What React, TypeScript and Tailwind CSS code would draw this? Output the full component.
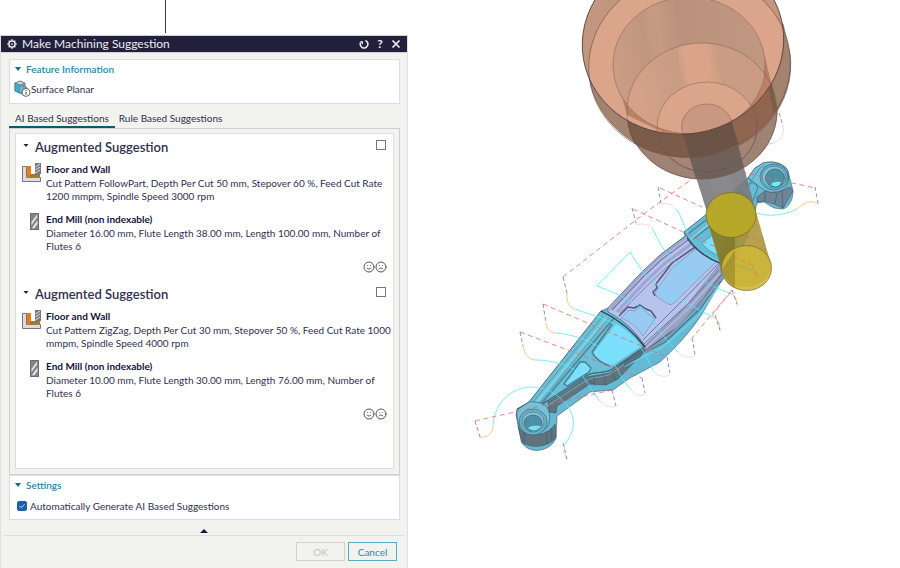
import { useState } from "react";
import type { ReactNode } from "react";
import { Frown, Smile } from "lucide-react";

const SUGGESTIONS = [
  {
    id: "follow",
    operation: "Cut Pattern FollowPart, Depth Per Cut 50 mm, Stepover 60 %, Feed Cut Rate 1200 mmpm, Spindle Speed 3000 rpm",
    tool: "Diameter 16.00 mm, Flute Length 38.00 mm, Length 100.00 mm, Number of Flutes 6",
  },
  {
    id: "zigzag",
    operation: "Cut Pattern ZigZag, Depth Per Cut 30 mm, Stepover 50 %, Feed Cut Rate 1000 mmpm, Spindle Speed 4000 rpm",
    tool: "Diameter 10.00 mm, Flute Length 30.00 mm, Length 76.00 mm, Number of Flutes 6",
  },
];

const RAPID_MOVES = [
  "M563 277L645 213L692 179",
  "M660 188L702 207",
  "M633 209L707 243L753 264",
  "M733 170L815 188",
  "M543 304L667 357",
  "M520 332L642 378",
  "M475 421L612 390",
  "M732 290L692 338",
  "M730 293L712 315",
];

const RETRACTS = [
  "M658 187L661 203",
  "M632 208L636 223",
  "M563 277L567 293",
  "M543 304L546 323",
  "M520 332L523 346",
  "M475 421L480 437",
  "M815 187L818 203",
  "M563 443L567 459",
  "M612 390L616 406",
  "M642 378L645 393",
  "M667 357L670 373",
  "M692 338L695 355",
  "M715 315L720 330",
  "M732 290L737 304",
  "M779 113L783 126",
];

const CUTS = [
  "M575 309C588 314 600 317 611 322C630 330 642 346 653 370",
  "M557 333C588 337 604 348 613 362C620 374 624 382 630 388",
  "M535 360C556 360 577 368 584 378C591 388 594 394 600 401",
  "M493 425C495 400 514 387 532 387C553 388 569 402 573 418C575 430 569 438 565 444",
  "M713 317C697 309 684 302 673 295C658 286 650 280 643 272C638 265 634 258 630 252L597 286C613 292 620 295 632 302C643 308 648 314 653 322C662 335 670 344 678 352",
  "M652 228C656 235 659 242 663 248C671 258 680 267 690 273C704 282 718 289 730 293",
  "M677 210C682 217 683 225 687 231C694 249 715 263 735 265C742 266 749 267 753 270",
  "M757 213C770 218 787 214 797 209",
  "M773 143C760 146 745 151 739 160C735 165 735 171 735 177",
];

const LEAD_INS = [
  "M567 293C566 303 570 308 575 309",
  "M546 323C547 331 551 333 557 333",
  "M523 346C525 356 529 359 535 360",
  "M480 437C487 438 493 434 493 425",
  "M713 317C718 319 720 324 720 331",
  "M730 293C736 296 737 300 737 306",
  "M797 209C804 203 810 199 819 204",
];

const LEAD_OUTS = [
  "M653 370C657 377 666 378 670 374",
  "M630 388C634 396 641 397 645 394",
  "M600 401C604 407 612 408 616 406",
  "M678 352C684 359 692 358 695 355",
  "M565 444C563 452 564 456 567 460",
  "M636 225C642 223 648 224 652 228",
  "M661 204C667 203 673 204 677 210",
  "M783 126C785 135 781 141 773 143",
];

function GearIcon() {
  return (
    <svg viewBox="0 0 16 16" className="size-2.5" fill="none" stroke="currentColor" aria-hidden>
      <circle cx="8" cy="8" r="5" strokeWidth="2.4" />
      <circle cx="8" cy="8" r="1.4" fill="currentColor" stroke="none" />
      <path
        d="M8 .5v2M8 13.5v2M.5 8h2M13.5 8h2M2.7 2.7l1.4 1.4M11.9 11.9l1.4 1.4M2.7 13.3l1.4-1.4M11.9 4.1l1.4-1.4"
        strokeWidth="2.4"
      />
    </svg>
  );
}

function ResetIcon() {
  return (
    <svg viewBox="0 0 10 10" className="size-2.5" fill="none" stroke="currentColor" aria-hidden>
      <path d="M1.6 3.6A3.8 3.8 0 1 0 6.4 1.6" strokeWidth="1.6" />
      <path d="M.6 2.2H4V5.4Z" fill="currentColor" stroke="none" />
    </svg>
  );
}

function SurfaceIcon() {
  return (
    <svg viewBox="0 0 17 17" className="size-[17px]" aria-hidden>
      <path d="M1 3L6 1L11 3V6L13 8V12L8 14L1 11Z" fill="#8c9499" stroke="#555e66" strokeWidth=".8" />
      <path d="M1 3L6 5V13L1 11Z" fill="#41abc9" stroke="#34758c" strokeWidth=".6" />
      <path d="M6 5L11 3V6L8 8V13L6 13Z" fill="#6f8f9b" />
      <path d="M6 7L9 6V12L6 13Z" fill="#5fbdd5" />
      <path d="M2 3L6 1.6L10 3L6 4.4Z" fill="#cdd2d5" />
      <circle cx="12" cy="12.4" r="4" fill="#fff" stroke="#555" strokeWidth=".9" />
      <path d="M12 11.8V14.6M12 10V11" stroke="#444" />
    </svg>
  );
}

function FloorWallIcon() {
  return (
    <svg viewBox="0 0 19 20" className="h-5 w-[19px]" aria-hidden>
      <path d="M.5 3.5H4.5V14.5H18.5V18.5H.5Z" fill="#dcdcdf" stroke="#77777b" />
      <path d="M5 3H9V11H18V14.5H5Z" fill="#e77d13" />
      <path d="M9 11H18V14H7Z" fill="#9b7a32" />
      <rect x="13" y="0" width="6" height="11" fill="#77777a" />
      <path d="M13.5 4L18 1M13.5 7L18 4M13.5 10L18 7" stroke="#c9c9cc" strokeWidth="1.1" />
    </svg>
  );
}

function EndMillIcon() {
  return (
    <svg viewBox="0 0 9 17" className="ml-2 h-[17px] w-[9px]" aria-hidden>
      <rect x=".5" y=".5" width="8" height="16" fill="#858588" stroke="#6c6c70" />
      <path d="M1.5 9L7 1.5V4.5L1.5 12ZM2 15L7.5 7.5V11L4 15.5Z" fill="#e7e7e9" />
    </svg>
  );
}

function Entry({ icon, title, text }: { icon: ReactNode; title: string; text: string }) {
  return (
    <div className="flex">
      <div className="w-6 shrink-0">{icon}</div>
      <div className="min-w-0 leading-[13px]">
        <h3 className="font-bold text-[#14143a]">{title}</h3>
        <p className="mt-px">{text}</p>
      </div>
    </div>
  );
}

function Suggestion({ id, operation, tool }: (typeof SUGGESTIONS)[number]) {
  return (
    <article className="h-[147px] pt-[5px] pl-1.5">
      <header className="flex h-4 items-center pr-[7px]">
        <button type="button" aria-label="Collapse suggestion" className="mr-[5px] w-2 shrink-0">
          <svg viewBox="0 0 8 8" className="size-2" aria-hidden>
            <path d="M1.5 1H6.5L4 4Z" fill="#23233f" />
          </svg>
        </button>
        <label htmlFor={id} className="text-[13px] font-semibold">
          Augmented Suggestion
        </label>
        <input id={id} type="checkbox" className="mb-1 ml-auto size-2.5 appearance-none border border-[#77777f] bg-white checked:bg-[#1e5fa8]" />
      </header>
      <div className="mt-2 flex flex-col gap-2.5">
        <Entry icon={<FloorWallIcon />} title="Floor and Wall" text={operation} />
        <Entry icon={<EndMillIcon />} title="End Mill (non indexable)" text={tool} />
      </div>
      <div className="mt-2 flex justify-end pr-1.5 text-[#55555b]">
        <button type="button" aria-label="Good suggestion">
          <Smile className="size-3" />
        </button>
        <button type="button" aria-label="Bad suggestion">
          <Frown className="size-3" />
        </button>
      </div>
    </article>
  );
}

function SectionTitle({ children }: { children: ReactNode }) {
  return (
    <h2 className="flex items-center gap-1 font-semibold text-[#2b87a8]">
      <svg viewBox="0 0 8 8" className="size-2" aria-hidden>
        <path d="M1 2H7L4 6Z" fill="#146c86" />
      </svg>
      {children}
    </h2>
  );
}

function MachiningDialog() {
  const [auto, setAuto] = useState(true);

  return (
    <section className="flex grow flex-col border-x border-[#dedee4] bg-[#f2f2ee]">
      <header className="flex h-[18px] items-center border-y border-[#d0d0dc] bg-[#22203a] px-1.5 text-[#ececf2]">
        <GearIcon />
        <h1 className="ml-[5px] text-[12px]">Make Machining Suggestion</h1>
        <div className="ml-auto flex items-center gap-1.5">
          <button type="button" aria-label="Reset">
            <ResetIcon />
          </button>
          <button type="button" className="w-2.5 text-[12px] font-bold">
            ?
          </button>
          <button type="button" aria-label="Close">
            <svg viewBox="0 0 10 10" className="size-2.5" stroke="currentColor" strokeWidth="1.7" aria-hidden>
              <path d="M1.5 1.5L8.5 8.5M8.5 1.5L1.5 8.5" />
            </svg>
          </button>
        </div>
      </header>

      <div className="pt-1.5 pr-[7px] pl-2">
        <section className="h-[45px] border border-[#dcdce2] bg-white px-1 pt-0.5">
          <SectionTitle>Feature Information</SectionTitle>
          <p className="mt-1 flex items-center">
            <SurfaceIcon />
            Surface Planar
          </p>
        </section>

        <div role="tablist" className="mt-1.5 flex h-[18px] items-stretch">
          <button type="button" role="tab" aria-selected className="border-b-2 border-[#0d5964] px-1.5">
            AI Based Suggestions
          </button>
          <button type="button" role="tab" aria-selected={false} className="border-b-2 border-transparent px-1">
            Rule Based Suggestions
          </button>
        </div>
        <div role="tabpanel" className="border border-[#d0d0d4] px-[5px] pt-1 pb-[5px]">
          <div className="h-[336px] border border-[#dcdce2] bg-white">
            {SUGGESTIONS.map((item) => (
              <Suggestion key={item.id} {...item} />
            ))}
          </div>
        </div>

        <section className="h-[45px] border border-[#dcdce2] bg-white px-1 pt-0.5">
          <SectionTitle>Settings</SectionTitle>
          <label className="mt-[7px] flex items-center gap-[3px] pl-[3px]">
            <span className="relative flex">
              <input
                type="checkbox"
                checked={auto}
                onChange={(e) => setAuto(e.target.checked)}
                className="peer size-2.5 appearance-none rounded-xs border border-[#1e5fa8] checked:bg-[#1e5fa8]"
              />
              <svg
                viewBox="0 0 10 10"
                className="pointer-events-none absolute inset-0 hidden size-2.5 peer-checked:block"
                fill="none"
                stroke="#c9e1f5"
                aria-hidden
              >
                <path d="M2.5 5L4.3 6.7L7.5 3.3" />
              </svg>
            </span>
            Automatically Generate AI Based Suggestions
          </label>
        </section>
      </div>

      <footer className="mx-[3px] mt-[9px]">
        <button type="button" aria-label="Show less" className="flex w-full justify-center border-b border-[#dcdce2] pb-0.5">
          <svg viewBox="0 0 8 4" className="h-1 w-2" aria-hidden>
            <path d="M4 0L8 4H0Z" fill="#1a1836" />
          </svg>
        </button>
        <div className="mt-1.5 flex justify-end gap-[3px] pr-[7px]">
          <button type="button" disabled className="h-[19px] w-[49px] border border-[#cfcfd4] text-[#c2c2c9]">
            OK
          </button>
          <button type="button" className="h-[19px] w-[49px] border border-[#55acc4] text-[#3289aa]">
            Cancel
          </button>
        </div>
      </footer>
    </section>
  );
}

function Toolpath() {
  return (
    <g fill="none" strokeWidth=".8">
      {CUTS.map((d) => (
        <path key={d} d={d} stroke="#4fe9f5" />
      ))}
      {LEAD_INS.map((d) => (
        <path key={d} d={d} stroke="#edbd67" />
      ))}
      {LEAD_OUTS.map((d) => (
        <path key={d} d={d} stroke="#f4cdd3" />
      ))}
      {RAPID_MOVES.map((d) => (
        <path key={d} d={d} stroke="#e4696b" strokeDasharray="5 3.5" />
      ))}
      {RETRACTS.map((d) => (
        <path key={d} d={d} stroke="#6b6fd9" strokeDasharray="4 2.5" />
      ))}
    </g>
  );
}

function Part() {
  return (
    <g stroke="#3a5568" strokeWidth=".6" strokeLinejoin="round">
      {/* body */}
      <path
        d="M516 415L517 409L529 402L601 311L608 308L640 274L660 255L685 236L684 232L707 214L748 178L755 168L763 163C774 160 785 164 788 171L793 191C793 200 789 207 783 209L774 208L764 202L757 203L750 230L733 267L720 283L702 314C690 333 672 351 660 362L630 378L613 390L600 391L590 392L557 416L556 438C552 448 540 453 529 449C524 446 521 443 521 440Z"
        fill="#66b9d2"
      />
      {/* side walls */}
      <path d="M548 402L587 377L610 373L642 347L645 351L618 379L606 385L590 384L557 406L556 413L549 412Z" fill="#61757f" />
      <path d="M587 377L593 384M594 376L595 386M604 375L606 385M612 372L616 380" />
      <path d="M518 426C524 438 547 438 555 424L556 437C551 446 532 450 522 442Z" fill="#60747f" />
      <path d="M524 432V444M546 431L547 444M551 428L552 441" />
      <path d="M757 197L765 191L777 193L790 187L793 191L783 208L774 204L764 201L757 202Z" fill="#6e8596" />
      <path d="M765 192V201M777 193L775 204M782 191L783 208" />

      {/* near arm */}
      <path d="M517 409L529 402L601 311C618 319 633 331 644 347L610 370C601 374 593 371 585 376L547 401Z" fill="#6dbfd6" />
      <path d="M603 316L532 403M609 318L539 404" stroke="#4b8499" />
      <path d="M606 318L537 402" stroke="#82d0e2" strokeWidth="2" />
      <path d="M614 318L541 404" stroke="#4f8799" strokeWidth="1.8" />
      <path d="M616 323C625 328 635 337 642 346L612 366C605 364 597 360 592 354Z" fill="#7cdffc" stroke="#5fb0c8" />
      <path d="M612 324L592 352C595 359 603 364 610 366" fill="none" stroke="#457a8d" strokeWidth="1.3" />
      <path d="M580 362L585 362L591 368L589 372L567 386L564 384Z" fill="#7cdffc" stroke="#457a8d" strokeWidth="1.3" />
      <path d="M541 405L586 376C594 371 603 374 611 370L644 347" fill="none" stroke="#426c7d" strokeWidth="1.1" />
      <path d="M544 408L587 380C595 376 604 378 612 373L645 350" fill="none" stroke="#83c5d7" />

      {/* middle web */}
      <path d="M608 308L640 274L660 255L686 236C697 249 707 257 720 264L711 284L645 346C635 330 622 319 608 312Z" fill="#b7c3ec" />
      <path d="M610 309L641 275L660 257L686 238" fill="none" stroke="#9aa6cf" strokeWidth="2" />
      <path d="M612 310L643 277L661 260L688 240" fill="none" stroke="#747aa0" strokeWidth="1.2" />
      <path d="M617 312L646 281L664 264L691 244" fill="none" stroke="#9da6d0" strokeWidth="3" />
      <path d="M620 313L649 284L667 267L694 247" fill="none" stroke="#6d7499" strokeWidth=".8" />
      <path d="M697 248C703 253 710 257 717 261L674 303Q671 306 668 304L657 297Q654 294 656 291L672 268Z" fill="#99caf1" stroke="#7088b4" />
      <path d="M697 246L672 263L656 284L657 288L653 292L655 296" fill="none" stroke="#4d5676" strokeWidth="1.4" />
      <path d="M621 318L629 310L634 311L640 307L655 319L643 336C637 327 630 321 621 318Z" fill="#99caf1" stroke="#7088b4" />
      <path d="M619 316L628 307L634 308L640 305L646 309L651 311L656 318" fill="none" stroke="#4d5676" strokeWidth="1.4" />
      <path d="M645 346L687 305L720 264L722 281L700 306L672 332L645 351Z" fill="#99a3c6" stroke="#6d7493" />
      <path d="M643 340L685 298L718 264M644 344L690 302L719 270" fill="none" stroke="#656d8f" strokeWidth=".9" />
      <path d="M646 348L688 309L720 273" fill="none" stroke="#b7bfe0" strokeWidth="1.2" />
      <path d="M646 350L678 327L703 299L721 275M627 362L665 342L700 309L721 281" fill="none" stroke="#566a80" strokeWidth="1.1" />
      <path d="M636 358L668 337L699 305L721 278" fill="none" stroke="#7a9db4" strokeWidth="1.6" />
      <path d="M624 366L663 347L699 315L719 285" fill="none" stroke="#6acbe2" strokeWidth="2" />
      <path d="M626 361L645 350L640 357L624 366Z" fill="#5a7583" />
      <path d="M601 311C618 319 633 331 645 347" fill="none" stroke="#2d4252" strokeWidth="1.3" />

      {/* far arm */}
      <path d="M684 232L707 214L748 178L758 187L754 198L739 236L720 263C705 257 693 246 684 232Z" fill="#67bbd4" />
      <path d="M688 234L710 217L752 182M693 239L714 223L746 198" fill="none" stroke="#477f94" strokeWidth="1.1" />
      <path d="M691 239L714 220L750 190" fill="none" stroke="#8bd5e5" strokeWidth="1.4" />
      <path d="M702 243L719 230L735 222L720 256C712 253 706 249 702 243Z" fill="#79dffa" stroke="#457f94" />
      <path d="M687 238C695 250 708 259 720 263" fill="none" stroke="#2d4252" strokeWidth="1.3" />

      {/* bosses */}
      <path d="M517 410L529 402C538 401 548 404 549 412C553 428 541 435 530 433C522 431 517 425 517 416Z" fill="#74c3d9" />
      <ellipse cx="533" cy="422" rx="14" ry="13" fill="#69b2c8" />
      <ellipse cx="533" cy="422" rx="11" ry="10" fill="#84c7d8" stroke="#37697b" />
      <ellipse cx="533" cy="423" rx="9" ry="8" fill="#4b90a3" />
      <path d="M528 428C531 425 537 426 541 426C538 431 532 432 528 428Z" fill="#74e2f1" stroke="none" />
      <path d="M748 178L755 168L763 163C774 160 785 164 788 172C791 185 784 192 774 192C769 193 764 190 760 187Z" fill="#72c1d9" />
      <path d="M752 180L759 169L765 165" fill="none" stroke="#3b7b91" />
      <ellipse cx="774" cy="177" rx="14" ry="13" fill="#67b1c9" />
      <ellipse cx="774" cy="177" rx="12" ry="11" fill="#7ec3d6" stroke="#37697b" />
      <ellipse cx="775" cy="178" rx="9.5" ry="9" fill="#4b90a3" />
      <path d="M771 184C774 181 779 182 781 182C780 187 773 188 771 184Z" fill="#78e8f7" stroke="none" />
    </g>
  );
}

function Holder() {
  return (
    <g stroke="#6b5145" strokeWidth=".6">
      <defs>
        <clipPath id="flange">
          <ellipse cx="683" cy="42" rx="101" ry="92" transform="rotate(-10 683 42)" />
        </clipPath>
        <clipPath id="flangeBase">
          <ellipse cx="689.5" cy="65" rx="101" ry="92" transform="rotate(-8 690 65)" />
        </clipPath>
        <clipPath id="bore">
          <ellipse cx="689" cy="65" rx="76" ry="68" />
        </clipPath>
        <clipPath id="nose">
          <ellipse cx="702" cy="111" rx="75" ry="68" />
        </clipPath>
        <linearGradient id="wall" x1="613" x2="765" y1="20" y2="0" gradientUnits="userSpaceOnUse">
          <stop offset="0" stopColor="#c99c84" />
          <stop offset=".18" stopColor="#c1967f" />
          <stop offset=".28" stopColor="#c79b83" />
          <stop offset=".42" stopColor="#ba917b" />
          <stop offset="1" stopColor="#c19881" />
        </linearGradient>
        <linearGradient id="cone" x1="627" x2="777" y1="30" y2="0" gradientUnits="userSpaceOnUse">
          <stop offset="0" stopColor="#d5a188" />
          <stop offset=".12" stopColor="#ce9f86" />
          <stop offset=".28" stopColor="#ca9c84" />
          <stop offset=".34" stopColor="#dba58b" />
          <stop offset=".48" stopColor="#d8a389" />
          <stop offset=".55" stopColor="#ca9c84" />
          <stop offset="1" stopColor="#c99b83" />
        </linearGradient>
      </defs>

      {/* nose below the flange */}
      <path d="M613 70L627 115A75 68 0 0 0 777 107L765 57Z" fill="#9d7e6f" fillOpacity=".97" />
      <ellipse cx="707" cy="127" rx="50" ry="45" fill="#a58575" />
      {/* shank */}
      <path d="M681 130L707 212H756L732 123Z" fill="#7a7a7c" fillOpacity=".9" stroke="none" />
      <path d="M704 160L720 212H741L726 160Z" fill="#8b8b8d" fillOpacity=".7" stroke="none" />
      <g clipPath="url(#nose)">
        <path d="M681 130L697 182H748L732 123Z" fill="#70605a" stroke="none" />
      </g>

      {/* flange side */}
      <path d="M583 50L589 76A101 92 0 0 0 790 54L783 24L683 -20Z" fill="#a38270" />
      <g clipPath="url(#flangeBase)">
        <path d="M613 70L627 120A75 68 0 0 0 777 107L765 55Z" fill="#7b5b4a" stroke="none" />
        <path d="M681 127L697 182H748L732 123Z" fill="#6b5346" stroke="none" />
        <path d="M732 123L746 165L780 145L765 70Z" fill="#906650" stroke="none" />
      </g>
      <ellipse cx="689.5" cy="65" rx="101" ry="92" transform="rotate(-8 690 65)" fill="none" />

      {/* seen through the top rim */}
      <g clipPath="url(#flange)">
        <rect x="570" y="-60" width="230" height="200" fill="#c3967f" stroke="none" />
        <ellipse cx="689.5" cy="65" rx="101" ry="92" transform="rotate(-8 690 65)" fill="#dba58b" />
        <path d="M613 65L627 115L700 150L777 107L765 57Z" fill="#b98063" stroke="none" />
        <ellipse cx="689" cy="65" rx="76" ry="68" fill="url(#wall)" strokeOpacity=".7" />
        <g clipPath="url(#bore)" strokeOpacity="0">
          <ellipse cx="702" cy="111" rx="75" ry="68" fill="url(#cone)" />
          <ellipse cx="707" cy="127" rx="50" ry="45" fill="#dba58b" />
          <ellipse cx="707" cy="127" rx="25.5" ry="23" fill="#ca9880" />
        </g>
      </g>
      <ellipse cx="683" cy="42" rx="101" ry="92" transform="rotate(-10 683 42)" fill="none" stroke="#4b372e" strokeWidth=".8" />
      <g fill="none" strokeOpacity=".7">
        <ellipse cx="702" cy="111" rx="75" ry="68" />
        <ellipse cx="707" cy="127" rx="50" ry="45" />
        <ellipse cx="707" cy="127" rx="25.5" ry="23" />
      </g>
    </g>
  );
}

function Cutter() {
  return (
    <g stroke="#776719" strokeWidth=".7">
      <path d="M706 216L722 271A25 22.5 0 0 0 771 264L756 212Z" fill="#ac9231" fillOpacity=".86" stroke="none" />
      <path d="M709 226L722 270L735 260V237Z" fill="#706c22" fillOpacity=".6" stroke="none" />
      <ellipse cx="746.5" cy="268" rx="25" ry="22.5" fill="#cdb638" fillOpacity=".88" />
      <path d="M722 270L735 250V288C728 284 724 278 722 270Z" fill="#83732a" fillOpacity=".45" stroke="none" />
      <ellipse cx="731" cy="215" rx="25" ry="22.5" fill="#b7a927" fillOpacity=".96" />
      <g fill="none" opacity=".65">
        <path d="M739 235L762 241M735 257L753 266" stroke="#cc6950" strokeDasharray="4 3" />
        <path d="M762 236L765 251M753 265L757 278" stroke="#797990" strokeDasharray="4 2" />
        <path d="M735 265L753 270" stroke="#88a07c" />
      </g>
    </g>
  );
}

function Viewport() {
  return (
    <svg viewBox="408 0 492 568" className="block w-full" role="img" aria-label="Toolpath preview on the part">
      <Part />
      <Toolpath />
      <Holder />
      <Cutter />
    </svg>
  );
}

export default function App() {
  return (
    <main className="grid min-h-screen grid-cols-[408px_1fr] items-start bg-white font-[Lato,'Open_Sans',sans-serif] text-[10px] leading-[14px] text-[#30304f]">
      <div className="flex min-h-screen flex-col">
        <div className="mb-0.5 ml-[165px] h-[33px] w-px bg-[#3c3c48]" />
        <MachiningDialog />
      </div>
      <Viewport />
    </main>
  );
}
